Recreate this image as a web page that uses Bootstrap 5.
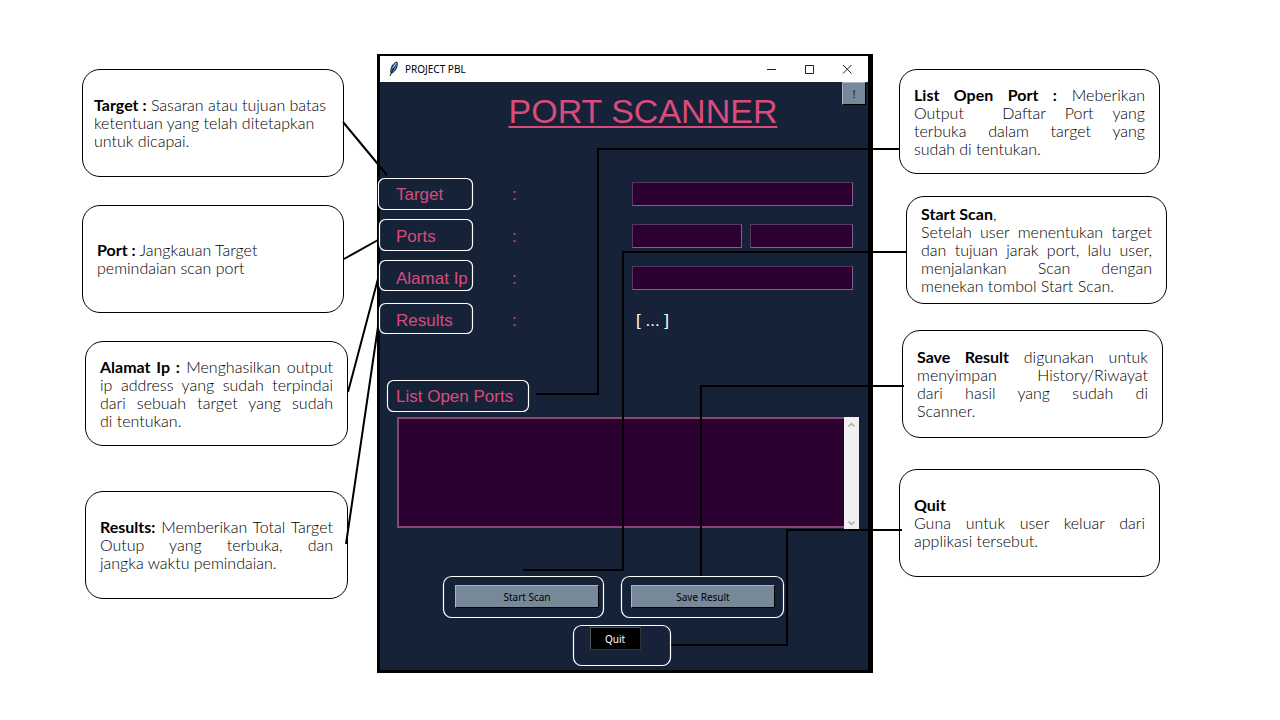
<!DOCTYPE html>
<html lang="id">
<head>
<meta charset="utf-8">
<meta name="viewport" content="width=device-width, initial-scale=1">
<title>Port Scanner</title>
<link href="https://cdn.jsdelivr.net/npm/bootstrap@5.3.0/dist/css/bootstrap.min.css" rel="stylesheet">
<style>
  :root { --ink: #162238; --plum: #2d0032; --rose: #d94c7a; --slate: #778899; }
  body { background: #fff; color: #000; }

  .guide { display: grid; grid-template-columns: 1fr 496px 1fr; padding: 54px 30px 47px 0; }

  /* explanation bubbles */
  .note { width: 262px; height: 108px; padding: 0 14px; border: 1px solid #000; border-radius: 18px; background: #fff;
          font: 300 16px/18px Lato, "Open Sans", sans-serif; }
  .note p { margin: 0; }
  .note b { font-weight: 700; }
  .spread span { display: block; text-align-last: justify; white-space: pre-wrap; }
  .spread span:last-child, .spread .lead-line { text-align-last: left; }
  .note-tight { padding: 0 3px 0 11px; }
  .notes-left { padding-top: 15px; }
  .notes-left .note { margin-right: 33px; margin-bottom: 28px; }
  .notes-left .note-near { width: 263px; margin-right: 29px; margin-bottom: 45px; }
  .notes-right { padding-top: 15px; }
  .notes-right .note { width: 261px; margin-left: 26px; margin-bottom: 22px; }
  .notes-right .note-far { margin-left: 33px; margin-bottom: 26px; }
  .notes-right .note-mid { margin-left: 29px; margin-bottom: 31px; }
  .note-low { height: 105px; }

  /* application window */
  .app { border: solid #000; border-width: 2px 5px 3px 3px; background: var(--ink); }
  .titlebar { height: 26px; background: #fff; font: 10px/26px "Noto Sans", sans-serif; padding: 0 16px 0 7px; }
  .titlebar button { padding: 0; border: 0; background: none; display: flex; }
  .app-body { padding: 9px 15px 20px 16px; font: 17px/26px "Liberation Sans", Arial, sans-serif; color: var(--rose); }
  .app-title { font-size: 34px; line-height: 40px; font-weight: 400; margin: 0 0 51px 37px;
               text-decoration: underline; text-decoration-thickness: 2px; text-underline-offset: 3px; }
  .help { top: 0; right: 2px; width: 24px; height: 21px; }
  .field { display: grid; grid-template-columns: 116px 120px 1fr; height: 24px; margin-bottom: 18px; }
  .entry { min-width: 0; width: 100%; height: 24px; border: 1px solid; border-color: #56395f #7b6287 #7b6287 #56395f;
           border-radius: 0; background: var(--plum); color: #fff; padding: 0 4px; font-size: 14px; }
  .range { display: grid; grid-template-columns: 110px 1fr; gap: 8px; }
  .result { padding-left: 3px; color: #fff; }
  .list-label { display: block; margin-top: 52px; margin-bottom: 7px; }
  .output { margin: 0 -6px 56px 1px; height: 112px; }
  .output textarea { flex: 1; min-width: 0; border: 2px solid #884770; border-right: 0; background: var(--plum); color: #fff; resize: none; height: 111px; }
  .scroller { width: 15px; background: #f0f0f0; padding: 5px 0 3px; }
  .actions { width: 320px; margin-left: 59px; }
  .quit-row { margin-top: 19px; }
  .tk-btn { border: 1px solid; border-color: #a9b5c1 #000 #000 #a9b5c1; background: var(--slate); color: #000;
            padding: 0; height: 23px; font: 10px/20px "Noto Sans", sans-serif; }
  .tk-wide { width: 144px; }
  .tk-quit { width: 51px; background: #000; color: #fff; border-color: #555 #333 #333 #555; }

  /* connector layer, drawn over the window */
  .links { inset: 0; width: 496px; height: 619px; overflow: visible; pointer-events: none; }
  .links path { fill: none; stroke: #000; stroke-width: 2; }
  .links rect { fill: none; stroke: #fff; stroke-width: 1.2; }

  @media (max-width: 1110px) {
    .guide { display: flex; flex-direction: column; align-items: center; padding: 24px; }
    .links { display: none; }
    .app { width: 100%; max-width: 496px; }
  }
</style>
</head>
<body>
<main class="guide">
  <section class="notes-left d-flex flex-column align-items-end">
    <div class="note note-tight d-flex align-items-center"><p><b>Target :</b> Sasaran atau tujuan batas<br>ketentuan yang telah ditetapkan<br>untuk dicapai.</p></div>
    <div class="note d-flex align-items-center"><p><b>Port :</b> Jangkauan Target<br>pemindaian scan port</p></div>
    <div class="note note-low note-near d-flex align-items-center"><p class="spread w-100"><span><b>Alamat Ip :</b> Menghasilkan output</span><span>ip address yang sudah terpindai</span><span>dari sebuah target yang sudah</span><span>di tentukan.</span></p></div>
    <div class="note note-near d-flex align-items-center"><p class="spread w-100"><span><b>Results:</b> Memberikan Total Target</span><span>Outup yang terbuka, dan</span><span>jangka waktu pemindaian.</span></p></div>
  </section>

  <div class="position-relative align-self-start">
    <section class="app">
      <header class="titlebar d-flex align-items-center">
        <svg width="14" height="16" viewBox="0 0 14 16" aria-hidden="true"><path d="M4 12C3 7 6 2 10 1c1 4-1 9-5 11z" fill="#3f74b8" stroke="#1b2433"/><path d="M3 15 8 4" stroke="#111" fill="none"/><path d="M6 7 9 2" stroke="#9cc4ef" fill="none"/></svg>
        <span class="ms-1 me-auto text-nowrap">PROJECT PBL</span>
        <span class="d-flex align-items-center">
          <button type="button" aria-label="Minimize"><svg width="10" height="10"><path d="M1 5.500h9" stroke="#222"/></svg></button>
          <button type="button" class="ms-4 ps-1" aria-label="Maximize"><svg width="10" height="10"><path d="M1.500 1.500h8v8h-8z" stroke="#222" fill="none"/></svg></button>
          <button type="button" class="ms-4 ps-1" aria-label="Close"><svg width="10" height="10"><path d="m1 1 8.500 8.500M9.500 1 1 9.500" stroke="#222"/></svg></button>
        </span>
      </header>
      <form class="app-body position-relative">
        <button type="button" class="tk-btn help position-absolute">!</button>
        <h1 class="app-title text-center text-nowrap">PORT SCANNER</h1>
        <div class="field"><label for="target">Target</label><span>:</span><input id="target" class="entry" type="text"></div>
        <div class="field"><label for="from">Ports</label><span>:</span><div class="range"><input id="from" class="entry" type="text"><input class="entry" type="text" aria-label="Port akhir"></div></div>
        <div class="field"><label for="ip">Alamat Ip</label><span>:</span><input id="ip" class="entry" type="text"></div>
        <div class="field"><span>Results</span><span>:</span><output class="result p-0 ps-1">[ ... ]</output></div>
        <label class="list-label" for="list">List Open Ports</label>
        <div class="output d-flex">
          <textarea id="list"></textarea>
          <div class="scroller d-flex flex-column justify-content-between align-items-center">
            <svg width="7" height="6"><path d="M.5 4.500l3-3 3 3" fill="none" stroke="#aaa" stroke-width="1.500"/></svg>
            <svg width="7" height="6"><path d="M.5 1.500l3 3 3-3" fill="none" stroke="#aaa" stroke-width="1.500"/></svg>
          </div>
        </div>
        <div class="actions">
          <div class="d-flex justify-content-between"><button type="button" class="tk-btn tk-wide">Start Scan</button><button type="button" class="tk-btn tk-wide">Save Result</button></div>
          <div class="quit-row d-flex justify-content-center"><button type="button" class="tk-btn tk-quit">Quit</button></div>
        </div>
      </form>
    </section>
    <svg class="links position-absolute" viewBox="377 54 496 619" aria-hidden="true">
      <path d="M343 122 387 175M344 259 378 240M348 392 379 275M346 544 379 320"/>
      <path d="M900 149H598V394H536M907 252H623V570H523M904 386H701V577M902 530H787V645H671"/>
      <rect x="378.500" y="178.500" width="94" height="31" rx="6"/>
      <rect x="379.500" y="219.500" width="93" height="31" rx="6"/>
      <rect x="379.500" y="260.500" width="93" height="30" rx="6"/>
      <rect x="379.500" y="303.500" width="93" height="30" rx="6"/>
      <rect x="387.500" y="380.500" width="141" height="31" rx="6"/>
      <rect x="443.500" y="576.500" width="160" height="41" rx="8"/>
      <rect x="621.500" y="576.500" width="162" height="41" rx="8"/>
      <rect x="573.500" y="625.500" width="97" height="40" rx="8"/>
    </svg>
  </div>

  <section class="notes-right">
    <div class="note note-low d-flex align-items-center"><p class="spread w-100"><span><b>List Open Port :</b> Meberikan</span><span>Output  Daftar Port yang</span><span>terbuka dalam target yang</span><span>sudah di tentukan.</span></p></div>
    <div class="note note-far d-flex align-items-center"><p class="spread w-100"><span class="lead-line"><b>Start Scan</b>,</span><span>Setelah user menentukan target</span><span>dan tujuan jarak port, lalu user,</span><span>menjalankan Scan dengan</span><span>menekan tombol Start Scan.</span></p></div>
    <div class="note note-mid d-flex align-items-center"><p class="spread w-100"><span><b>Save Result</b> digunakan untuk</span><span>menyimpan History/Riwayat</span><span>dari hasil yang sudah di</span><span>Scanner.</span></p></div>
    <div class="note d-flex align-items-center"><p class="spread w-100"><b>Quit</b><span>Guna untuk user keluar dari</span><span>applikasi tersebut.</span></p></div>
  </section>
</main>
<script src="https://cdn.jsdelivr.net/npm/bootstrap@5.3.0/dist/js/bootstrap.bundle.min.js"></script>
</body>
</html>
